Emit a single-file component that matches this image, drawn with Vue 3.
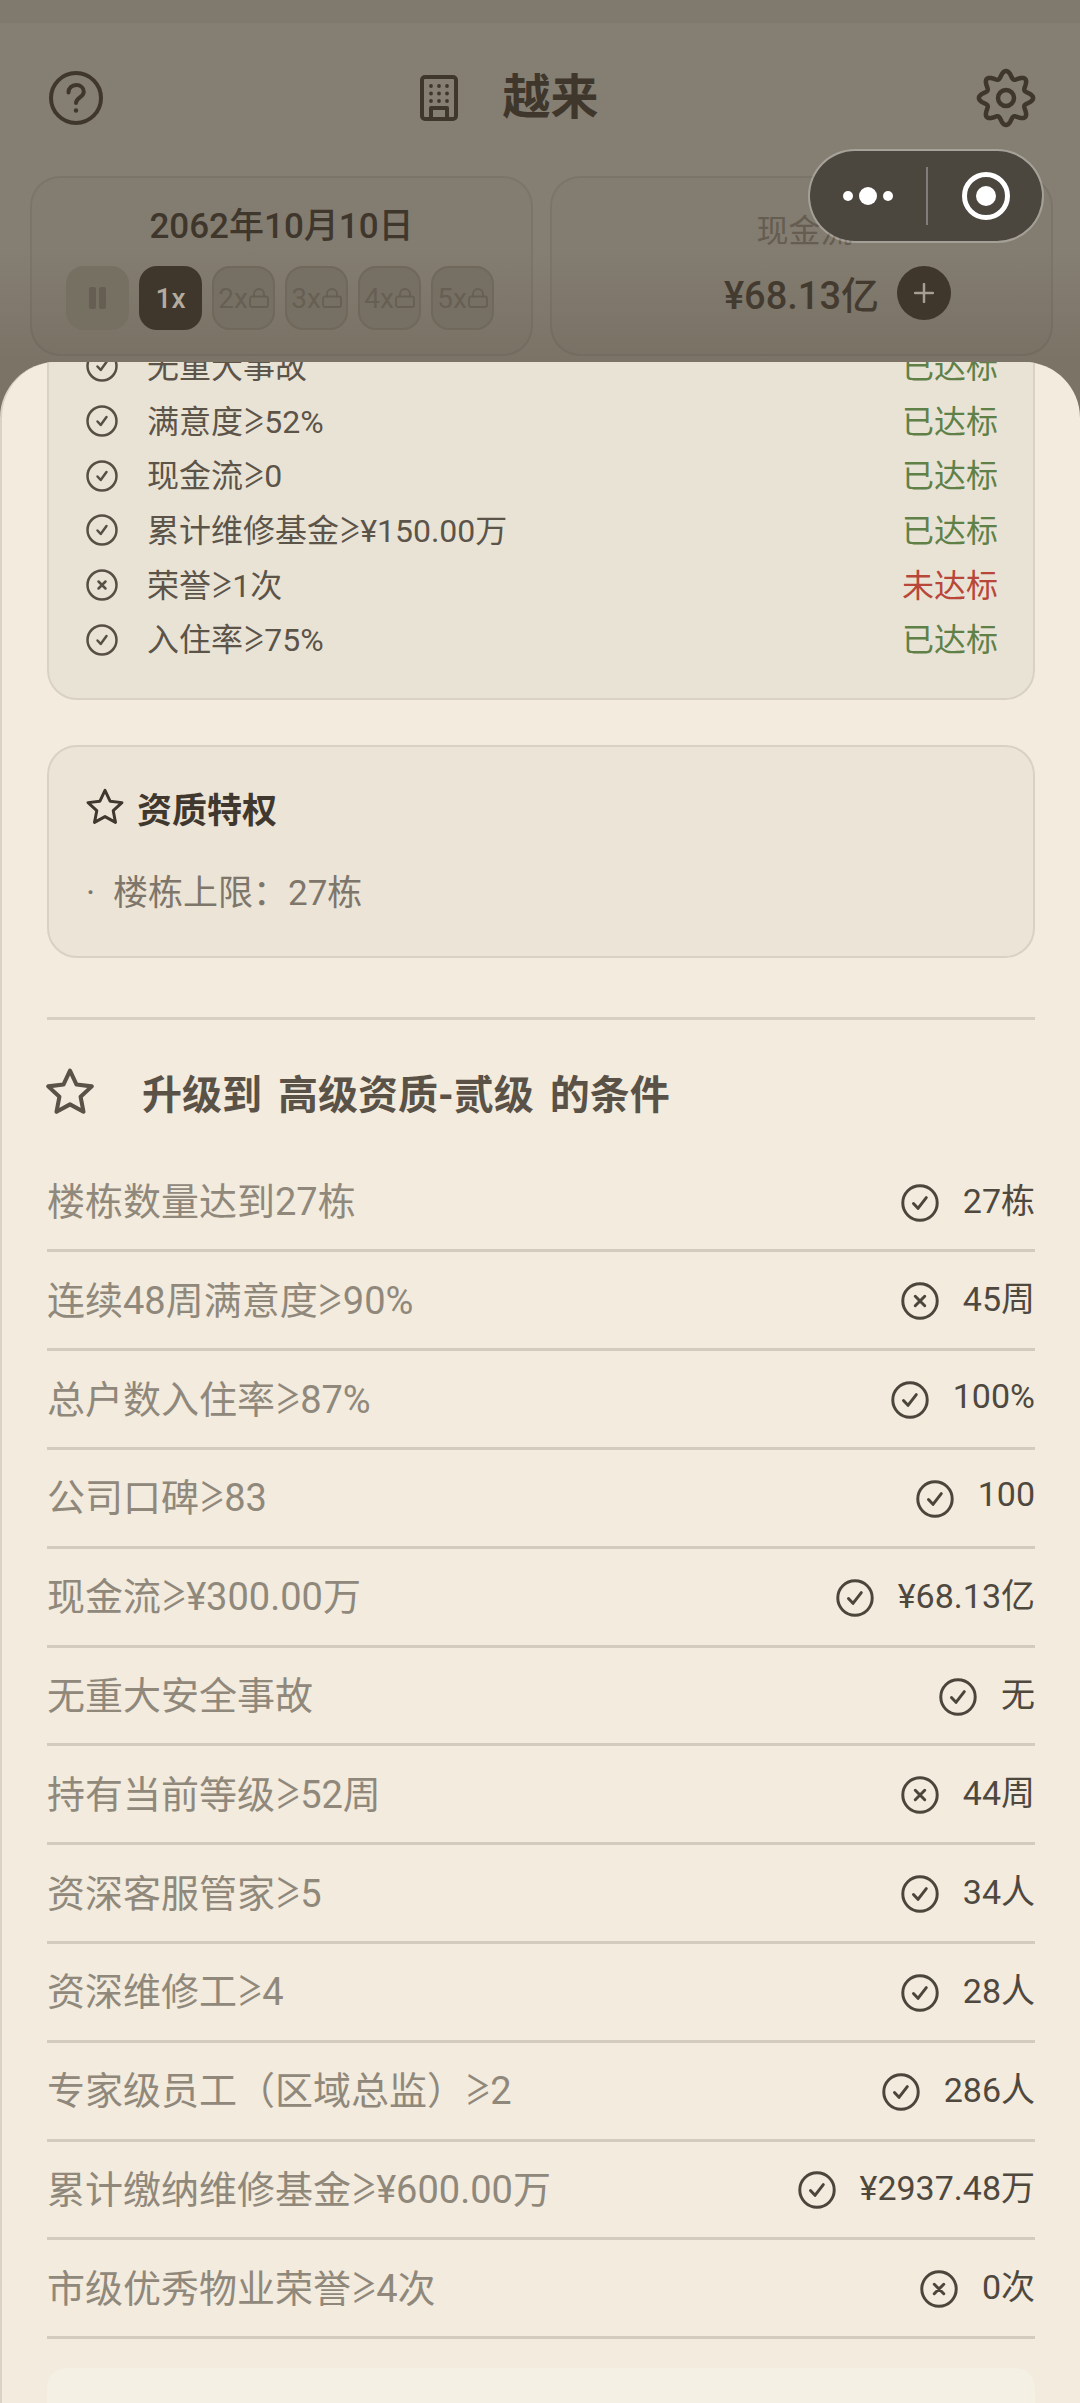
<template>
  <div class="page">
    <header class="top-bar">
      <svg class="ic-help" viewBox="0 0 54 54">
        <circle cx="27" cy="27" r="25" />
        <path d="M19.500 21.500c0-4.500 3.500-7.500 7.700-7.500 4.300 0 7.600 2.800 7.600 6.700 0 5.500-7.800 5.800-7.800 11.300" />
        <circle class="dot" cx="27" cy="39.500" r="2.200" />
      </svg>
      <div class="company">
        <svg class="ic-building" viewBox="0 0 38 46">
          <rect x="2" y="2" width="34" height="42" rx="3" />
          <path d="M11 44v-11h16v11" />
          <g class="dots">
            <circle v-for="d in buildingDots" :key="d.k" :cx="d.x" :cy="d.y" r="1.900" />
          </g>
        </svg>
        <span class="company-name">越来</span>
      </div>
      <svg class="ic-gear" viewBox="0 0 60 60">
        <path :d="gearPath" />
        <circle cx="30" cy="30" r="8" />
      </svg>
    </header>

    <section class="stat-row">
      <div class="stat-card">
        <div class="date">2062年10月10日</div>
        <div class="speeds">
          <div class="speed pause">
            <span class="bar"></span><span class="bar"></span>
          </div>
          <div class="speed active">1x</div>
          <div v-for="s in lockedSpeeds" :key="s" class="speed locked">
            <span>{{ s }}</span>
            <svg class="ic-lock" viewBox="0 0 20 20">
              <rect x="1" y="8.500" width="18" height="10.500" rx="2" />
              <path d="M5 8.500V6a5 5 0 0 1 10 0v2.500" />
            </svg>
          </div>
        </div>
      </div>
      <div class="stat-card cash">
        <div class="cash-label">现金流</div>
        <div class="cash-line">
          <span class="cash-value">¥68.13亿</span>
          <span class="plus">
            <svg viewBox="0 0 20 20"><path d="M10 1v18M1 10h18" /></svg>
          </span>
        </div>
      </div>
    </section>

    <!-- 微信小程序胶囊 -->
    <div class="capsule">
      <div class="capsule-dots"><i></i><i class="big"></i><i></i></div>
      <span class="capsule-line"></span>
      <div class="capsule-target"><i></i></div>
    </div>

    <main class="sheet">
      <div class="panel current">
        <div v-for="r in currentRules" :key="r.name" class="rule">
          <svg class="ic-state" viewBox="0 0 32 32">
            <circle cx="16" cy="16" r="14.500" />
            <path v-if="r.ok" d="M11.500 16.500l3.200 3.500 5.800-8" />
            <path v-else d="M12.500 12.500l7 7M19.500 12.500l-7 7" />
          </svg>
          <span class="rule-name">
            <template v-for="(p, i) in r.name.split('≥')" :key="i"><span v-if="i" class="ge">≥</span>{{ p }}</template>
          </span>
          <span class="rule-state" :class="{ bad: !r.ok }">{{ r.ok ? '已达标' : '未达标' }}</span>
        </div>
      </div>

      <div class="panel perks">
        <div class="perks-title">
          <svg class="ic-star small" viewBox="0 0 24 24">
            <path :d="starPath" />
          </svg>
          <span>资质特权</span>
        </div>
        <div class="perk"><span class="perk-dot">·</span>楼栋上限：27栋</div>
      </div>

      <div class="upgrade-head">
        <svg class="ic-star" viewBox="0 0 24 24">
          <path :d="starPath" />
        </svg>
        <span>升级到 高级资质-贰级 的条件</span>
      </div>

      <div v-for="c in upgradeRules" :key="c.name" class="cond">
        <span class="cond-name">
          <template v-for="(p, i) in c.name.split('≥')" :key="i"><span v-if="i" class="ge">≥</span>{{ p }}</template>
        </span>
        <div class="cond-right">
          <svg class="ic-state big" viewBox="0 0 32 32">
            <circle cx="16" cy="16" r="14.500" />
            <path v-if="c.ok" d="M10.500 16.500l3.800 4 7-9" />
            <path v-else d="M12 12l8 8M20 12l-8 8" />
          </svg>
          <span class="cond-value">{{ c.value }}</span>
        </div>
      </div>

      <div class="next-panel"></div>
    </main>
  </div>
</template>

<script setup>
const lockedSpeeds = ['2x', '3x', '4x', '5x']

const buildingDots = []
for (const y of [11, 18.5, 26]) {
  for (const x of [11, 19, 27]) buildingDots.push({ k: `${x}-${y}`, x, y })
}

// 八齿齿轮，用余弦算轮廓
const gearPath = (() => {
  const pts = []
  for (let i = 0; i < 160; i++) {
    const a = (i / 160) * Math.PI * 2
    const r = 23.5 + 3.6 * Math.cos(8 * (a + Math.PI / 2))
    pts.push(`${(30 + r * Math.cos(a)).toFixed(2)} ${(30 + r * Math.sin(a)).toFixed(2)}`)
  }
  return 'M' + pts.join('L') + 'Z'
})()

const starPath = 'M12 2.500l2.900 6.200 6.800.8-5 4.600 1.300 6.700-6-3.300-6 3.300 1.300-6.700-5-4.600 6.800-.8z'

const currentRules = [
  { name: '无重大事故', ok: true },
  { name: '满意度≥52%', ok: true },
  { name: '现金流≥0', ok: true },
  { name: '累计维修基金≥¥150.00万', ok: true },
  { name: '荣誉≥1次', ok: false },
  { name: '入住率≥75%', ok: true }
]

const upgradeRules = [
  { name: '楼栋数量达到27栋', ok: true, value: '27栋' },
  { name: '连续48周满意度≥90%', ok: false, value: '45周' },
  { name: '总户数入住率≥87%', ok: true, value: '100%' },
  { name: '公司口碑≥83', ok: true, value: '100' },
  { name: '现金流≥¥300.00万', ok: true, value: '¥68.13亿' },
  { name: '无重大安全事故', ok: true, value: '无' },
  { name: '持有当前等级≥52周', ok: false, value: '44周' },
  { name: '资深客服管家≥5', ok: true, value: '34人' },
  { name: '资深维修工≥4', ok: true, value: '28人' },
  { name: '专家级员工（区域总监）≥2', ok: true, value: '286人' },
  { name: '累计缴纳维修基金≥¥600.00万', ok: true, value: '¥2937.48万' },
  { name: '市级优秀物业荣誉≥4次', ok: false, value: '0次' }
]
</script>

<style>
html, body {
  margin: 0;
  background: #7d7669;
}
</style>

<style scoped>
.page {
  position: relative;
  height: 2403px;
  overflow: hidden;
  display: flex;
  flex-direction: column;
  background: linear-gradient(#807a6e 0, #807a6e 23px, #857e72 23px, #857e72 250px, #7a7366 362px);
  font-family: Roboto, "Noto Sans CJK SC", sans-serif;
  color: #3f362c;
}

svg {
  display: block;
  fill: none;
  stroke-linecap: round;
  stroke-linejoin: round;
}

.ge {
  display: inline-block;
  margin: 0 -0.17em;
  font-family: "Noto Sans CJK SC", sans-serif;
  transform: scaleX(0.68);
}

.top-bar {
  height: 80px;
  margin-top: 58px;
  padding: 0 44px 0 49px;
  display: flex;
  align-items: center;
  justify-content: space-between;
  flex-shrink: 0;
}

.ic-help {
  width: 54px;
  height: 54px;
  stroke: #40372c;
  stroke-width: 4;
}
.ic-help .dot {
  fill: #40372c;
  stroke: none;
}

.company {
  display: flex;
  align-items: center;
  gap: 44px;
  margin-right: 60px;
}
.ic-building {
  width: 38px;
  height: 46px;
  stroke: #40372c;
  stroke-width: 4;
}
.ic-building .dots {
  fill: #40372c;
  stroke: none;
}
.company-name {
  font-size: 48px;
  font-weight: 700;
  line-height: 60px;
}

.ic-gear {
  width: 60px;
  height: 60px;
  stroke: #40372c;
  stroke-width: 4.500;
}

.stat-row {
  margin-top: 38px;
  padding: 0 27px 0 30px;
  display: grid;
  grid-template-columns: 503px 503px;
  gap: 17px;
  flex-shrink: 0;
}

.stat-card {
  box-sizing: border-box;
  height: 180px;
  border: 2px solid rgba(60, 50, 40, 0.09);
  border-radius: 30px;
  background: rgba(60, 50, 40, 0.018);
  display: flex;
  flex-direction: column;
  align-items: center;
}

.date {
  margin-top: 27px;
  font-size: 35px;
  font-weight: 500;
  line-height: 44px;
}

.speeds {
  margin-top: 17px;
  margin-right: 3px;
  display: flex;
  gap: 10px;
}

.speed {
  box-sizing: border-box;
  width: 63px;
  height: 64px;
  border-radius: 18px;
  display: flex;
  align-items: center;
  justify-content: center;
  font-size: 28px;
}
.speed.pause {
  gap: 3px;
  background: #767063;
}
.speed .bar {
  width: 7px;
  height: 22px;
  border-radius: 2px;
  background: #665e52;
}
.speed.active {
  background: #3f362c;
  color: #b3ab9d;
  font-weight: 500;
}
.speed.locked {
  gap: 1px;
  background: #767064;
  border: 2px solid #6f685b;
  color: #675f52;
}
.ic-lock {
  width: 20px;
  height: 20px;
  stroke: #675f52;
  stroke-width: 1.800;
}

.cash-label {
  margin-top: 31px;
  margin-left: 6px;
  font-size: 32px;
  line-height: 44px;
  color: #655d51;
}

.cash-line {
  margin-top: 12px;
  margin-left: 72px;
  display: flex;
  align-items: center;
  gap: 18px;
}
.cash-value {
  font-size: 38px;
  font-weight: 500;
  color: #443b30;
}
.plus {
  width: 54px;
  height: 54px;
  border-radius: 50%;
  background: #3f362c;
  display: flex;
  align-items: center;
  justify-content: center;
}
.plus svg {
  width: 20px;
  height: 20px;
  stroke: #a69e90;
  stroke-width: 2.500;
}

.capsule {
  position: absolute;
  top: 149px;
  left: 808px;
  box-sizing: border-box;
  width: 236px;
  height: 94px;
  border: 2px solid rgba(255, 255, 255, 0.28);
  border-radius: 47px;
  background: #4b473f;
  background-clip: padding-box;
  display: flex;
  align-items: center;
}
.capsule-dots {
  width: 116px;
  display: flex;
  align-items: center;
  justify-content: center;
  gap: 6px;
}
.capsule-dots i {
  width: 10px;
  height: 10px;
  border-radius: 50%;
  background: #fff;
}
.capsule-dots i.big {
  width: 18px;
  height: 18px;
}
.capsule-line {
  width: 2px;
  height: 58px;
  background: rgba(255, 255, 255, 0.3);
}
.capsule-target {
  box-sizing: border-box;
  width: 48px;
  height: 48px;
  margin-left: 34px;
  border: 5px solid #fff;
  border-radius: 50%;
  display: flex;
  align-items: center;
  justify-content: center;
}
.capsule-target i {
  width: 20px;
  height: 20px;
  border-radius: 50%;
  background: #fff;
}

.sheet {
  box-sizing: border-box;
  flex: 1;
  min-height: 0;
  margin-top: 6px;
  padding: 0 45px;
  overflow: hidden;
  background: #f2ebde;
  border-left: 2px solid #d9d3c6;
  border-radius: 56px 56px 0 0;
}

.panel {
  box-sizing: border-box;
  width: 988px;
  background: #e9e3d6;
  border: 2px solid #d8d1c4;
  border-radius: 30px;
}

.current {
  margin-top: -40px;
  padding: 15px 35px 31px 37px;
}

.rule {
  height: 54.700px;
  display: flex;
  align-items: center;
  font-size: 32px;
}
.ic-state {
  width: 32px;
  height: 32px;
  flex-shrink: 0;
  stroke: #574f44;
  stroke-width: 2.500;
}
.ic-state.big {
  width: 38px;
  height: 38px;
  margin-top: 2px;
  stroke: #4c453b;
}
.rule-name {
  margin-left: 29px;
  margin-bottom: 5px;
  color: #5c5449;
}
.rule-state {
  margin-left: auto;
  margin-bottom: 5px;
  color: #5f8148;
}
.rule-state.bad {
  color: #b8473a;
}

.perks {
  margin-top: 45px;
  padding: 37px 37px 39px;
  background: #ebe4d7;
}
.perks-title {
  display: flex;
  align-items: center;
  gap: 11px;
  height: 46px;
  font-size: 35px;
  font-weight: 700;
  color: #40382e;
}
.ic-star {
  width: 54px;
  height: 54px;
  margin-left: -4px;
  flex-shrink: 0;
  stroke: #5a5246;
  stroke-width: 1.800;
}
.ic-star.small {
  width: 42px;
  height: 42px;
  margin-left: -2px;
  stroke: #40382e;
  stroke-width: 1.700;
}
.perk {
  margin-top: 41px;
  font-size: 35px;
  line-height: 46px;
  color: #7e766a;
}
.perk-dot {
  display: inline-block;
  width: 27px;
}

.upgrade-head {
  box-sizing: content-box;
  margin-top: 59px;
  padding: 48px 0 37.500px;
  border-top: 3px solid #d6cfc2;
  display: flex;
  align-items: center;
  gap: 45px;
  height: 48px;
  font-size: 40px;
  font-weight: 700;
  word-spacing: 6px;
  color: #5a5247;
}

.cond {
  box-sizing: border-box;
  height: 98.800px;
  width: 988px;
  border-bottom: 3px solid #d2cbbe;
  display: flex;
  align-items: center;
  justify-content: space-between;
}
.cond-name {
  margin-bottom: 6px;
  font-size: 38px;
  color: #8f887b;
}
.cond-right {
  display: flex;
  align-items: center;
  gap: 24px;
}
.cond-value {
  font-size: 34px;
  color: #4f483e;
  margin-top: -7px;
}

.next-panel {
  width: 988px;
  height: 80px;
  margin-top: 29px;
  border-radius: 20px;
  background: #f5f0e4;
}
</style>
